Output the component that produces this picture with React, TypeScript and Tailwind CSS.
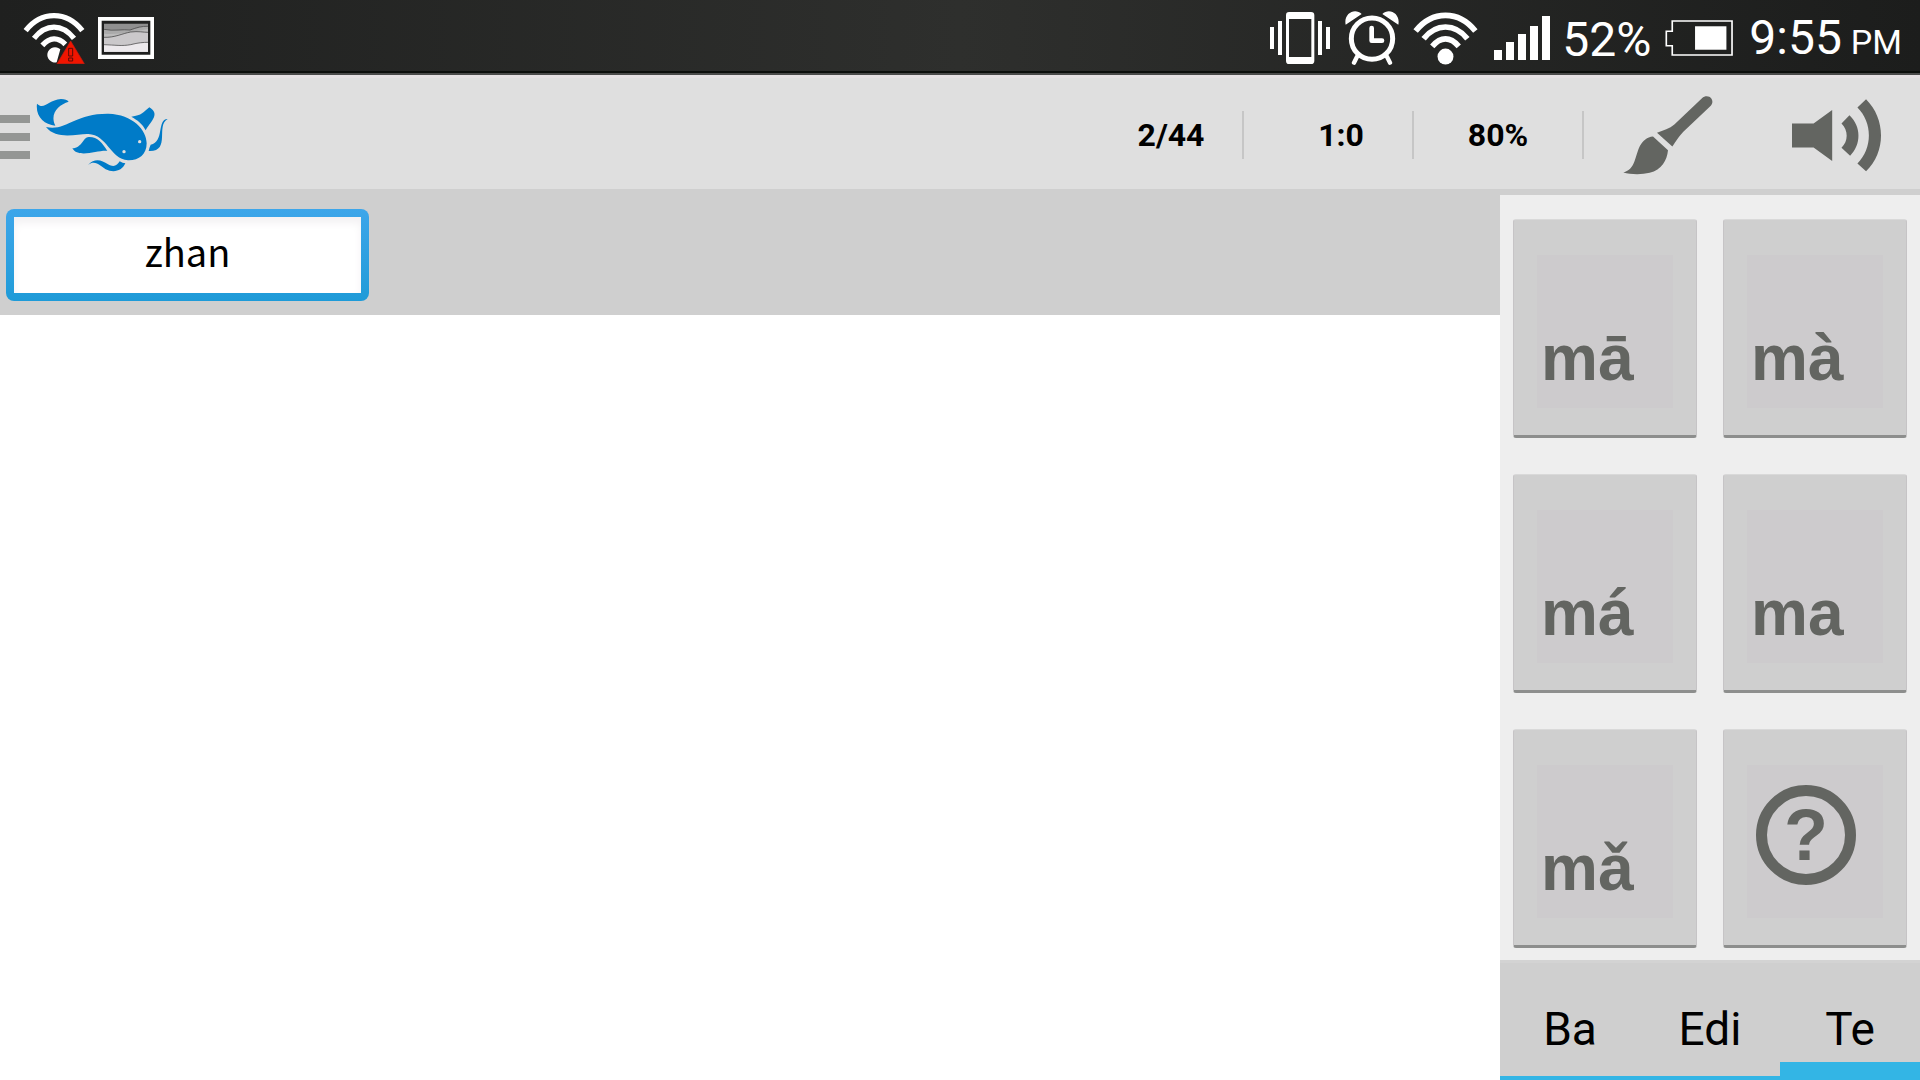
import { useState } from "react";

const TONES = [
  { id: "first", label: "mā" },
  { id: "fourth", label: "mà" },
  { id: "second", label: "má" },
  { id: "neutral", label: "ma" },
  { id: "third", label: "mǎ" },
];

const TABS = ["Ba", "Edi", "Te"];

function WifiIcon() {
  return (
    <svg viewBox="490 31 196 162" className="h-[54px] w-[65px]" fill="none" stroke="#fff" strokeWidth="17">
      <path d="M498 91 C548 28 628 28 678 91" />
      <path d="M522 114 C560 67 616 67 654 114" />
      <path d="M548 137 C574 107 602 107 628 137" />
      <circle cx="588" cy="168" r="24" fill="#fff" stroke="none" />
    </svg>
  );
}

function WifiAlertIcon() {
  return (
    <svg viewBox="69 39 186 156" className="h-[52px] w-[62px]" fill="none" stroke="#fff" strokeWidth="16">
      <path d="M77 95 C124 35 200 35 247 95" />
      <path d="M102 118 C138 73 186 73 222 118" />
      <path d="M127 139 C150 114 174 114 196 136" />
      <path d="M181 151 A23 23 0 1 0 170 190 Z" fill="#fff" stroke="none" />
      <path d="M212 126 L253 194 H171 Z" fill="#f01500" stroke="#c81c10" strokeWidth="2" />
      <path d="M206 148 H218 V171 H206 Z M206 177 H218 V186 H206 Z" stroke="#5a0d08" strokeWidth="3" />
    </svg>
  );
}

function PictureIcon() {
  return (
    <svg viewBox="294 54 168 126" className="h-[42px] w-[56px]">
      <path d="M294 54 H462 V180 H294 Z" fill="#fff" />
      <path d="M305 65 H451 V167 H305 Z" fill="#1f201f" />
      <path d="M312 74 H444 V158 H312 Z" fill="#8f8f8f" />
      <path d="M312 89 C340 96 370 90 390 92 C410 86 425 80 444 81 V158 H312 Z" fill="#aaa" />
      <path d="M312 104 C335 106 365 104 390 100 L444 90 V158 H312 Z" fill="#bbb" />
      <path d="M312 115 C345 116 365 104 392 99 C415 96 430 100 444 100 V158 H312 Z" fill="#cac8ca" />
      <path d="M312 136 C345 138 365 142 392 137 C415 131 430 130 444 130 V158 H312 Z" fill="#ece9ec" />
      <g fill="none" stroke="#333" strokeWidth="2">
        <path d="M312 91 C340 97 370 90 390 93 C410 86 425 81 444 82" />
        <path d="M312 115 C345 116 365 104 392 99 C415 96 430 100 444 100" />
        <path d="M312 137 C345 138 365 142 392 137 C415 131 430 130 444 130" />
      </g>
    </svg>
  );
}

function VibrateIcon() {
  return (
    <svg viewBox="63 36 180 156" className="h-[52px] w-[60px]" fill="#fff">
      <path d="M63 81 H75 V147 H63 Z M87 63 H99 V165 H87 Z M207 63 H219 V165 H207 Z M231 81 H243 V147 H231 Z" />
      <path fillRule="evenodd" d="M120 36 H186 Q196 36 196 46 V182 Q196 192 186 192 H120 Q111 192 111 182 V46 Q111 36 120 36 Z M120 57 V171 H187 V57 Z" />
    </svg>
  );
}

function AlarmIcon() {
  return (
    <svg viewBox="288 33 162 162" className="h-[54px] w-[54px]" fill="none" stroke="#fff">
      <circle cx="369" cy="116" r="62" strokeWidth="15" />
      <path d="M368 84 V122 H399" strokeWidth="14" strokeLinecap="round" strokeLinejoin="round" />
      <path d="M324 170 L315 188 M414 170 L423 188" strokeWidth="13" strokeLinecap="round" />
      <path d="M290 74 C283 40 318 22 338 42 Z M448 74 C455 40 420 22 400 42 Z" fill="#fff" stroke="none" />
    </svg>
  );
}

function SignalIcon() {
  return (
    <svg viewBox="732 54 168 132" className="h-[44px] w-[56px]" fill="#fff">
      <path d="M732 156 h24 v30 h-24 Z M768 132 h24 v54 h-24 Z M804 108 h24 v78 h-24 Z M840 84 h24 v102 h-24 Z M876 54 h24 v132 h-24 Z" />
    </svg>
  );
}

function BatteryIcon() {
  return (
    <svg viewBox="255 57 204 109" className="h-[36px] w-[68px]">
      <path d="M276 60 H457 V163 H276 V135 H258 V91 H276 Z" fill="none" stroke="#fff" strokeWidth="5" />
      <path d="M345 76 H440 V147 H345 Z" fill="#fff" />
    </svg>
  );
}

function FishLogo() {
  return (
    <svg viewBox="108 294 396 222" className="h-[74px] w-[132px]" fill="#007bc8">
      <path d="M111 311 C132 332 144 300 183 297 C195 297 202 300 206 305 C176 314 148 340 166 377 C132 374 106 350 111 311 Z" />
      <path d="M138 381 C200 394 222 340 325 341 C398 343 440 390 440 430 C440 464 416 482 384 481 C330 477 322 404 265 402 C236 400 170 422 138 381 Z" />
      <path d="M217 445 C247 444 248 412 266 411 C292 410 307 428 322 453 C296 449 235 477 217 445 Z" />
      <path d="M394 350 C426 347 430 336 448 322 C480 342 456 360 437 391 C428 372 412 360 394 350 Z" />
      <path d="M503 357 C470 356 494 426 452 434 C449 440 447 447 446 453 C514 456 466 376 503 357 Z" />
      <path d="M264 495 C285 472 305 480 324 493 C342 503 352 496 359 484 C365 488 371 489 376 490 C366 514 340 519 317 508 C302 499 286 478 264 495 Z" />
      <circle cx="372" cy="455" r="5" fill="#dfdfdf" />
      <circle cx="419" cy="425" r="5" fill="#dfdfdf" />
    </svg>
  );
}

function BrushIcon() {
  return (
    <svg viewBox="188 77 270 236" className="h-[79px] w-[90px]" fill="#636561">
      <path d="M425 83 C434 75 447 76 453 84 C459 93 456 101 449 108 L369 184 C354 200 348 212 336 228 L290 187 C309 180 328 174 342 162 Z" />
      <path d="M278 198 L323 239 C320 270 304 297 268 307 C243 313 210 312 189 306 C226 297 223 258 239 226 C248 210 260 200 278 198 Z" />
    </svg>
  );
}

function SpeakerIcon() {
  return (
    <svg viewBox="693 86 268 218" className="h-[73px] w-[89px]" fill="#636561">
      <path d="M693 159 H758 L814 118 V272 L758 231 H693 Z" />
      <path d="M866 134 C902 168 902 222 868 256 L842 232 C863 212 863 180 842 159 Z" />
      <path d="M916 86 C976 146 976 244 916 303 L890 279 C936 234 936 156 890 111 Z" />
    </svg>
  );
}

function PadButton({ label, children }: { label?: string; children: React.ReactNode }) {
  return (
    <button
      aria-label={label}
      className="
        mx-[13px] mt-6 mb-3 h-[219px] rounded-[3px] px-[23px] pt-[35px] pb-[27px]
        border-x border-t border-x-[#c6c4c6] border-t-[#d9d9d9]
        border-b-3 border-b-[#8d8e8d] bg-[#cfcfcf]
      "
    >
      <span className="flex h-full bg-[#cdcbcd] text-[#636561]">{children}</span>
    </button>
  );
}

export default function App() {
  const [answer, setAnswer] = useState("zhan");
  const [tab, setTab] = useState("Te");

  return (
    <div className="flex min-h-screen flex-col bg-white font-['Roboto',sans-serif] text-black">
      {/* Status bar */}
      <div className="flex h-[75px] items-center justify-between border-b-2 border-[#4a4b4a] bg-linear-to-r from-[#1f201f] via-[#2e2f2d] to-[#1c1d1c] pt-[3px] pr-[18px] pl-[23px] text-white shadow-[inset_0_-2px_0_#0c0f0c]">
        <div className="flex items-center gap-[13px]">
          <WifiAlertIcon />
          <PictureIcon />
        </div>
        <div className="flex items-center">
          <VibrateIcon />
          <span className="ml-[15px]"><AlarmIcon /></span>
          <span className="ml-[14px]"><WifiIcon /></span>
          <span className="ml-4"><SignalIcon /></span>
          <span className="ml-3 pt-1 text-[48px] leading-[56px]">52%</span>
          <span className="ml-[14px]"><BatteryIcon /></span>
          <span className="ml-4 flex items-baseline gap-[9px] pt-1 text-[48px] leading-[56px]">
            9:55 <span className="text-[34px]">PM</span>
          </span>
        </div>
      </div>

      {/* Action bar */}
      <header className="flex h-[120px] items-center justify-between border-t-3 border-b-6 border-t-[#e5e1e3] border-b-[#cfcfcf] bg-[#dfdfdf] pt-[3px]">
        <button aria-label="Menu" className="flex items-center gap-[6px]">
          <span className="flex w-[30px] flex-col gap-[10px] pt-1">
            <span className="h-2 bg-[#949694]" />
            <span className="h-2 bg-[#949694]" />
            <span className="h-2 bg-[#949694]" />
          </span>
          <FishLogo />
        </button>
        <div className="flex items-center text-[32px] leading-[48px] font-bold">
          <span className="w-[170px] border-r-2 border-[#c6c6c6] pl-[26px] text-center">2/44</span>
          <span className="w-[170px] border-r-2 border-[#c6c6c6] pl-[26px] text-center">1:0</span>
          <span className="w-[170px] border-r-2 border-[#c6c6c6] text-center">80%</span>
          <button aria-label="Draw" className="flex w-[168px] justify-center">
            <BrushIcon />
          </button>
          <button aria-label="Play sound" className="flex w-[168px] justify-center">
            <SpeakerIcon />
          </button>
        </div>
      </header>

      <div className="flex flex-1">
        <main className="flex-1">
          <div className="h-[120px] bg-[#cfcfcf] px-[6px] pt-[14px]">
            <div className="h-[92px] w-[363px] rounded-lg bg-linear-to-b from-[#3da6ea] to-[#1e9bd8] p-2">
              <input
                aria-label="Pinyin"
                value={answer}
                onChange={(e) => setAnswer(e.target.value)}
                className="
                  block h-full w-full bg-white pb-[10px] text-center
                  font-['Noto_Sans_CJK_SC',sans-serif] text-[38px] leading-[60px]
                  shadow-[inset_0_6px_8px_#f3f1f3] outline-none
                "
              />
            </div>
          </div>
        </main>

        {/* Tone pad */}
        <aside className="flex w-[420px] flex-col bg-[#eee]">
          <div className="grid grid-cols-2">
            {TONES.map((tone) => (
              <PadButton key={tone.id}>
                <span className="self-end pb-[14px] pl-1 font-['Liberation_Sans',sans-serif] text-[64px] leading-[72px] font-bold">
                  {tone.label}
                </span>
              </PadButton>
            ))}
            <PadButton label="Help">
              <span className="mt-5 ml-[9px] flex size-[100px] items-center justify-center rounded-full border-11 border-[#636561] font-['Liberation_Sans',sans-serif] text-[72px] leading-[72px] font-bold">
                ?
              </span>
            </PadButton>
          </div>

          <nav className="flex flex-1 border-t-3 border-[#d3d3d3] bg-[#cfcfcf]">
            {TABS.map((name) => (
              <button
                key={name}
                onClick={() => setTab(name)}
                className={`
                  flex h-[117px] flex-1 items-end justify-center border-[#33b5e5] text-[46px] leading-[56px]
                  ${tab === name ? "border-b-18 pb-[5px]" : "border-b-4 pb-[19px]"}
                `}
              >
                {name}
              </button>
            ))}
          </nav>
        </aside>
      </div>
    </div>
  );
}
